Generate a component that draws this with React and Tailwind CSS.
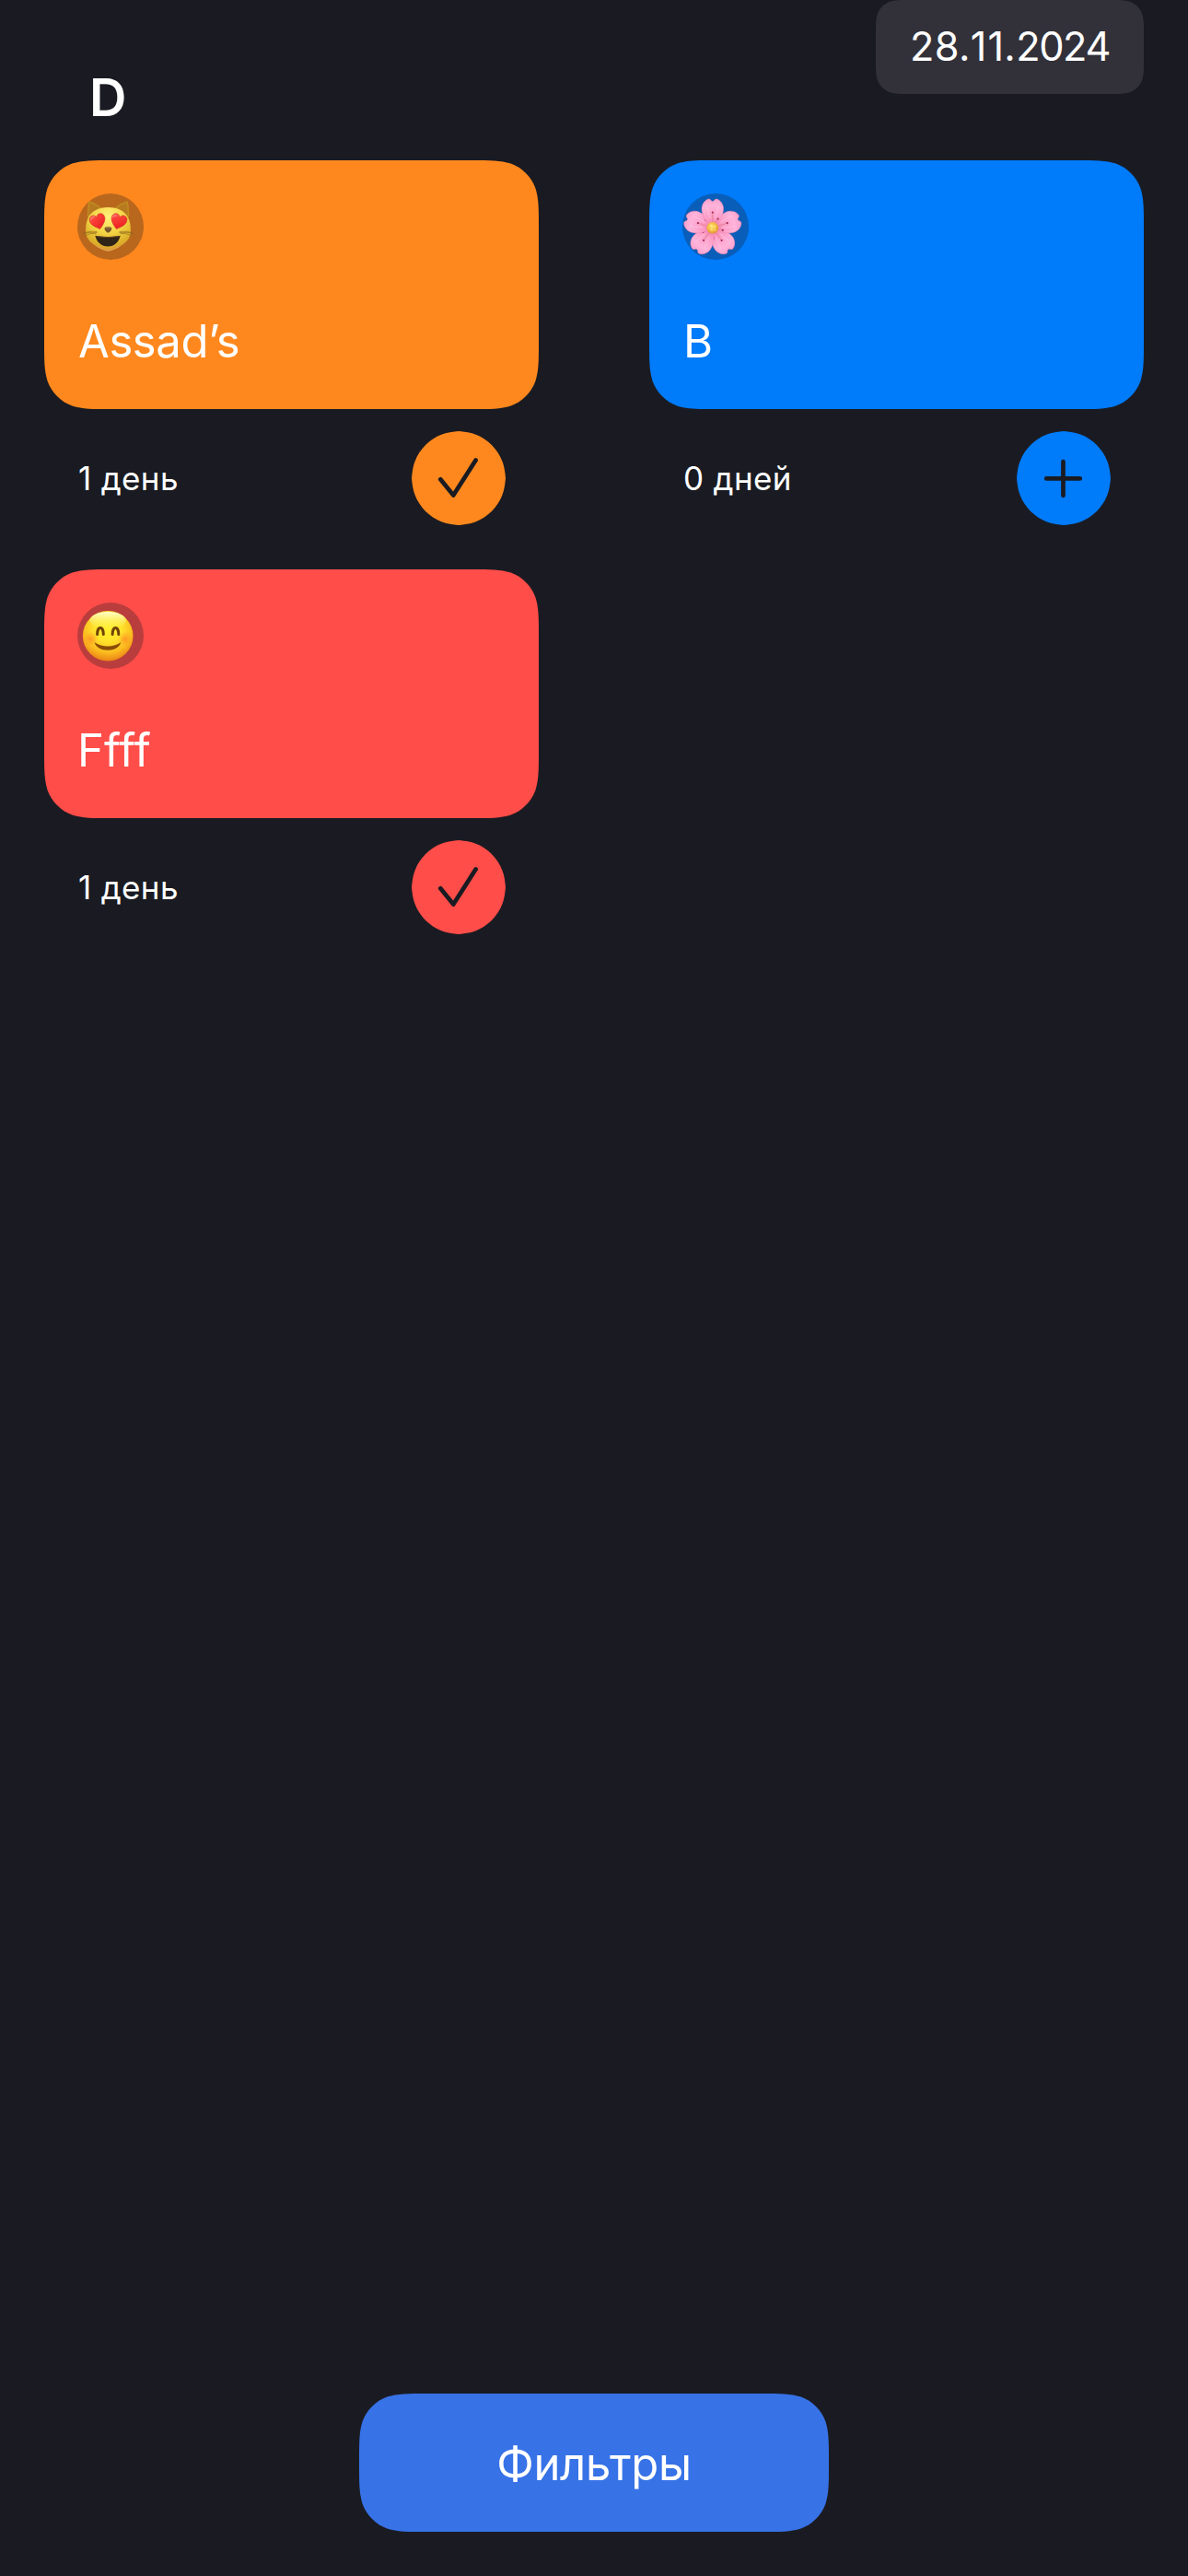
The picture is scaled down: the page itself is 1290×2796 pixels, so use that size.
import { useId } from "react";

// Rounded rectangle whose corners ease into the sides.
function smoothRect(w, h, r) {
  const k = [1.52866, 1.08849, 0.86841, 0.63149, 0.37282, 0.16906, 0.07491].map((n) => n * r);
  const [a, b, c, d, e, f, g] = k;
  return `path("M${a} 0H${w - a}C${w - b} 0 ${w - c} 0 ${w - d} ${g}C${w - e} ${f} ${w - f} ${e} ${w - g} ${d}C${w} ${c} ${w} ${b} ${w} ${a}V${h - a}C${w} ${h - b} ${w} ${h - c} ${w - g} ${h - d}C${w - f} ${h - e} ${w - e} ${h - f} ${w - d} ${h - g}C${w - c} ${h} ${w - b} ${h} ${w - a} ${h}H${a}C${b} ${h} ${c} ${h} ${d} ${h - g}C${e} ${h - f} ${f} ${h - e} ${g} ${h - d}C0 ${h - c} 0 ${h - b} 0 ${h - a}V${a}C0 ${b} 0 ${c} ${g} ${d}C${f} ${e} ${e} ${f} ${d} ${g}C${c} 0 ${b} 0 ${a} 0Z")`;
}

function CatEmoji() {
  const id = useId();
  const heart = "M0 9C-5 5-9.2 1.5-9.2-3.2C-9.2-6.6-7-8.6-4.5-8.6C-2.3-8.6-.7-7.2 0-5.2C.7-7.2 2.3-8.6 4.5-8.6C7-8.6 9.2-6.6 9.2-3.2C9.2 1.5 5 5 0 9Z";
  return (
    <svg viewBox="0 0 72 72" className="size-[72px]">
      <defs>
        <radialGradient id={id + "f"} cx=".5" cy=".22" r=".8">
          <stop offset="0" stopColor="#FFF27C" />
          <stop offset=".45" stopColor="#F4D546" />
          <stop offset=".8" stopColor="#DDB029" />
          <stop offset="1" stopColor="#D9933A" />
        </radialGradient>
        <linearGradient id={id + "h"} x1="0" y1="0" x2=".6" y2="1">
          <stop offset="0" stopColor="#FF7466" />
          <stop offset=".35" stopColor="#FB4038" />
          <stop offset="1" stopColor="#E81F22" />
        </linearGradient>
      </defs>
      <g fill="#B87A20" stroke="#BF8C1E" strokeWidth="1.5" strokeLinejoin="round">
        <path d="M11.500 25C11.600 19 12 13 13 9.300C18 10.500 23 13.500 27 17.500Z" />
        <path d="M55.500 25C55.400 19 55.200 13 54.200 9.300C49 10.500 44 13.500 40 17.500Z" />
      </g>
      <path d="M33.500 15C44 15 52.500 19 56 28C58.300 34 58.300 42 57 46.500C54.500 53.500 43 60.500 36 62.200C34.300 62.800 32.700 62.800 31 62.200C24 60.500 12.500 53.500 10 46.500C8.700 42 8.700 34 11 28C14.500 19 23 15 33.500 15Z" fill={`url(#${id}f)`} />
      <path d="M21 57.500Q28 61.200 33.500 62.300Q39 61.200 46 57.500" fill="none" stroke="#EFA872" strokeWidth=".8" opacity=".7" />
      <g fill="none" stroke="#8B671B" strokeWidth=".8" strokeLinecap="round" opacity=".75">
        <path d="M21 41.500Q12 40 5.500 44M21 42.500Q13 42 7 43M20 43.500Q14 42.500 9 45.500M46 41.500Q55 40 61.500 44M46 42.500Q54 42 60 43M47 43.500Q53 42.500 58 45.500" />
      </g>
      <g fill={`url(#${id}h)`} stroke="#D63425" strokeWidth=".6">
        <path d={heart} transform="translate(22.300 30.600) rotate(-16) scale(.92)" />
        <path d={heart} transform="translate(44.700 30.600) rotate(16) scale(.92)" />
      </g>
      <g fill="none" stroke="#FFB0A0" strokeWidth=".9" strokeLinecap="round" opacity=".75">
        <path d="M15 28Q16 25.500 18.500 25M38 26Q39.500 23.500 42 24" />
      </g>
      <path d="M29.500 38C29.500 36.500 31.500 36.200 33.400 36.200S37.300 36.500 37.300 38C37.300 39.800 35 42.600 33.400 42.600S29.500 39.800 29.500 38Z" fill="#79552A" />
      <path d="M31 37.800Q33.400 36.700 35.700 37.800" fill="none" stroke="#B18A58" strokeWidth=".8" />
      <path d="M19.300 45.800Q33.300 48.300 46.700 45.800C45 53 40 57.600 33.200 57.600S21 53 19.300 45.800Z" fill="#2F2418" />
      <path d="M20.300 46.600Q33.300 49 45.700 46.600" fill="none" stroke="#68461A" strokeWidth="1" />
    </svg>
  );
}

function BlossomEmoji() {
  const id = useId();
  const petal = "M0 0C-6-4-11.800-13-11.800-21C-11.500-26-8.500-30-4.500-31.200C-3-31.500-2.500-30.800-1.300-29.200Q0-28.200 1.300-29.200C2.500-30.800 3-31.500 4.500-31.200C8.500-30 11.500-26 11.800-21C11.800-13 6-4 0 0Z";
  const turns = [144, 216, 72, 288, 0];
  return (
    <svg viewBox="0 0 72 72" className="size-[72px]">
      <defs>
        <radialGradient id={id + "p"} gradientUnits="userSpaceOnUse" cx="0" cy="0" r="32">
          <stop offset="0" stopColor="#F27AA8" />
          <stop offset=".35" stopColor="#FB9BC5" />
          <stop offset=".75" stopColor="#FFB3DA" />
          <stop offset="1" stopColor="#FCA2CD" />
        </radialGradient>
        <radialGradient id={id + "c"} cx=".45" cy=".4" r=".6">
          <stop offset="0" stopColor="#FFE673" />
          <stop offset=".6" stopColor="#F4BC43" />
          <stop offset="1" stopColor="#DD9137" />
        </radialGradient>
      </defs>
      <g transform="translate(32.800 37.300)">
        {turns.map((t) => (
          <g key={t} transform={`rotate(${t})`}>
            <path d={petal} fill={`url(#${id}p)`} stroke="#EE86B5" strokeWidth=".5" />
            <path d="M-3-10Q-5-18-6-24M3-10Q5-18 6-24" fill="none" stroke="#FFC9E4" strokeWidth="1" opacity=".6" />
            <path d="M0-5V-16M2-4L5.500-9.500" fill="none" stroke="#DF7C86" strokeWidth=".7" />
            <circle cx="0" cy="-16.700" r="1.100" fill="#A52B57" />
            <circle cx="5.800" cy="-9.700" r="1.100" fill="#A52B57" />
          </g>
        ))}
        <circle r="6.300" fill={`url(#${id}c)`} />
        <g fill="#FFF0A0" opacity=".8">
          <circle cx="-2" cy="-2.500" r="1" />
          <circle cx="2" cy="-1.500" r=".9" />
          <circle cx="-1" cy="2" r=".9" />
          <circle cx="2.700" cy="2.500" r=".8" />
        </g>
      </g>
    </svg>
  );
}

function SmileEmoji() {
  const id = useId();
  return (
    <svg viewBox="0 0 72 72" className="size-[72px]">
      <defs>
        <radialGradient id={id + "f"} cx=".5" cy=".34" r=".68">
          <stop offset="0" stopColor="#FFF12F" />
          <stop offset=".4" stopColor="#FFE32B" />
          <stop offset=".72" stopColor="#FCBC20" />
          <stop offset="1" stopColor="#E87E14" />
        </radialGradient>
        <linearGradient id={id + "s"} x1="0" y1="0" x2="0" y2="1">
          <stop offset="0" stopColor="#FFFFD8" stopOpacity=".95" />
          <stop offset="1" stopColor="#FFF766" stopOpacity="0" />
        </linearGradient>
        <radialGradient id={id + "b"}>
          <stop offset="0" stopColor="#FF7B25" stopOpacity=".6" />
          <stop offset="1" stopColor="#FF8B25" stopOpacity="0" />
        </radialGradient>
      </defs>
      <circle cx="33.200" cy="36.200" r="27.300" fill={`url(#${id}f)`} />
      <ellipse cx="33.200" cy="19.500" rx="19.500" ry="9.500" fill={`url(#${id}s)`} />
      <circle cx="14.500" cy="39.500" r="8" fill={`url(#${id}b)`} />
      <circle cx="51.900" cy="39.500" r="8" fill={`url(#${id}b)`} />
      <path d="M21.600 34.600C21.600 25 28.300 25 28.300 34.600M38.100 34.600C38.100 25 44.800 25 44.800 34.600" fill="none" stroke="#704408" strokeWidth="3" strokeLinecap="round" />
      <path d="M18.700 43.200Q33 52 47.200 43.200C46 48.500 40 51.700 33 51.700S20 48.500 18.700 43.200Z" fill="#8A4C06" />
    </svg>
  );
}

function MarkIcon({ done }) {
  return (
    <svg viewBox="0 0 102 102" className="size-[102px]" fill="none" stroke="#1A1B22" strokeWidth="4.700" strokeLinecap="round" strokeLinejoin="round">
      <path d={done ? "M31.300 52.300L45.300 69.600L69.600 31.500" : "M50.500 33.200V69.800M32.200 51.400H68.800"} />
    </svg>
  );
}

const circleClip =
  "[clip-path:path('M51_0C57_.6_64_1.300_69.800_3.800C82.500_8.700_93.300_19.500_98.200_32.200C100.700_38_101.400_45_102_51C101.400_57_100.700_64_98.200_69.800C93.300_82.500_82.500_93.300_69.800_98.200C64_100.700_57_101.400_51_102C45_101.400_38_100.700_32.200_98.200C19.500_93.300_8.700_82.500_3.800_69.800C1.300_64_.6_57_0_51C.6_45_1.300_38_3.800_32.200C8.700_19.500_19.500_8.700_32.200_3.800C38_1.300_45_.6_51_0Z')]";

const trackers = [
  { title: "Assad’s", Emoji: CatEmoji, days: "1 день", done: true, color: "bg-[#FF881E]", titleSpacing: "tracking-[-0.4px]", indent: "pl-[37px]" },
  { title: "B", Emoji: BlossomEmoji, days: "0 дней", done: false, color: "bg-[#007BFA]", titleSpacing: "tracking-normal", indent: "pl-[37px]" },
  { title: "Ffff", Emoji: SmileEmoji, days: "1 день", done: true, color: "bg-[#FF4D49]", titleSpacing: "tracking-[0.1px]", indent: "pl-[36px]" },
];

function Tracker({ title, Emoji, days, done, color, titleSpacing, indent }) {
  return (
    <article className="h-[444px] w-[537px]">
      <div className={`h-[270px] pt-9 ${color}`} style={{ clipPath: smoothRect(537, 270, 48) }}>
        <div className="ml-9 size-[72px] overflow-hidden rounded-full bg-[#1A1B22]/30">
          <Emoji />
        </div>
        <h2 className={`mt-[58px] text-[49px] leading-[62px] font-normal ${indent} ${titleSpacing}`}>{title}</h2>
      </div>
      <div className="mt-6 flex items-center justify-between pr-9 pl-[37px]">
        <span className="text-[35px] leading-[54px] font-normal tracking-[0.35px]">{days}</span>
        <button aria-label={done ? "Выполнено" : "Добавить"} className={`size-[102px] ${color} ${circleClip}`}>
          <MarkIcon done={done} />
        </button>
      </div>
    </article>
  );
}

export default function App() {
  return (
    <main className="flex h-[2796px] w-[1290px] flex-col bg-[#1A1B22] px-12 pb-12 font-['Inter',sans-serif] text-white">
      <header className="flex h-[174px] items-start justify-between">
        <h1 className="mt-[72px] ml-[49px] text-[56px] leading-[68px] font-semibold">D</h1>
        <div
          className="h-[102px] w-[291px] bg-[#323139] pl-[37px] text-[43.3px] leading-[101px] tracking-[0.35px] whitespace-nowrap"
          style={{ clipPath: smoothRect(291, 102, 24) }}
        >
          28.<span className="tracking-[1px]">1</span>1.<span className="tracking-[-1.4px]">2024</span>
        </div>
      </header>
      <section className="grid grid-cols-[537px_537px] justify-between">
        {trackers.map((t) => (
          <Tracker key={t.title} {...t} />
        ))}
      </section>
      <button
        className="mt-auto ml-[342px] h-[150px] w-[510px] bg-[#3772E7] pt-[4px] text-[49px] leading-[62px] tracking-[-0.3px]"
        style={{ clipPath: smoothRect(510, 150, 48) }}
      >
        Фильтры
      </button>
    </main>
  );
}
